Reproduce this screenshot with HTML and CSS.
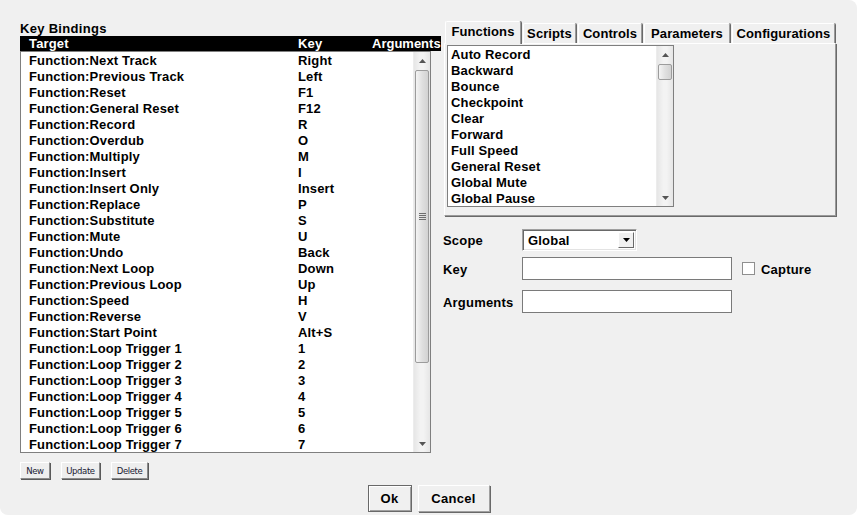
FILE: index.html
```html
<!DOCTYPE html>
<html>
<head>
<meta charset="utf-8">
<link rel="stylesheet" href="styles.css">
</head>
<body>
<div class="window">
  <div class="main">
    <div class="left">
      <div class="title">Key Bindings</div>
      <div class="header">
        <span class="c-target">Target</span><span class="c-key">Key</span><span class="c-args">Arguments</span>
      </div>
      <div class="list">
        <div class="rows">
          <div class="row"><span class="c-target">Function:Next Track</span><span class="c-key">Right</span></div>
          <div class="row"><span class="c-target">Function:Previous Track</span><span class="c-key">Left</span></div>
          <div class="row"><span class="c-target">Function:Reset</span><span class="c-key">F1</span></div>
          <div class="row"><span class="c-target">Function:General Reset</span><span class="c-key">F12</span></div>
          <div class="row"><span class="c-target">Function:Record</span><span class="c-key">R</span></div>
          <div class="row"><span class="c-target">Function:Overdub</span><span class="c-key">O</span></div>
          <div class="row"><span class="c-target">Function:Multiply</span><span class="c-key">M</span></div>
          <div class="row"><span class="c-target">Function:Insert</span><span class="c-key">I</span></div>
          <div class="row"><span class="c-target">Function:Insert Only</span><span class="c-key">Insert</span></div>
          <div class="row"><span class="c-target">Function:Replace</span><span class="c-key">P</span></div>
          <div class="row"><span class="c-target">Function:Substitute</span><span class="c-key">S</span></div>
          <div class="row"><span class="c-target">Function:Mute</span><span class="c-key">U</span></div>
          <div class="row"><span class="c-target">Function:Undo</span><span class="c-key">Back</span></div>
          <div class="row"><span class="c-target">Function:Next Loop</span><span class="c-key">Down</span></div>
          <div class="row"><span class="c-target">Function:Previous Loop</span><span class="c-key">Up</span></div>
          <div class="row"><span class="c-target">Function:Speed</span><span class="c-key">H</span></div>
          <div class="row"><span class="c-target">Function:Reverse</span><span class="c-key">V</span></div>
          <div class="row"><span class="c-target">Function:Start Point</span><span class="c-key">Alt+S</span></div>
          <div class="row"><span class="c-target">Function:Loop Trigger 1</span><span class="c-key">1</span></div>
          <div class="row"><span class="c-target">Function:Loop Trigger 2</span><span class="c-key">2</span></div>
          <div class="row"><span class="c-target">Function:Loop Trigger 3</span><span class="c-key">3</span></div>
          <div class="row"><span class="c-target">Function:Loop Trigger 4</span><span class="c-key">4</span></div>
          <div class="row"><span class="c-target">Function:Loop Trigger 5</span><span class="c-key">5</span></div>
          <div class="row"><span class="c-target">Function:Loop Trigger 6</span><span class="c-key">6</span></div>
          <div class="row"><span class="c-target">Function:Loop Trigger 7</span><span class="c-key">7</span></div>
        </div>
        <div class="vscroll">
          <div class="arrow"><svg width="7" height="4" viewBox="0 0 7 4"><path d="M0 4 L3.5 0 L7 4 Z" fill="#555"/></svg></div>
          <div class="track">
            <div class="thumb big"><span class="grip"></span></div>
          </div>
          <div class="arrow"><svg width="7" height="4" viewBox="0 0 7 4"><path d="M0 0 L3.5 4 L7 0 Z" fill="#555"/></svg></div>
        </div>
      </div>
      <div class="small-buttons">
        <div class="sbtn w-new">New</div>
        <div class="sbtn w-update">Update</div>
        <div class="sbtn w-delete">Delete</div>
      </div>
    </div>
    <div class="right">
      <div class="tabs">
        <div class="tab selected t-func">Functions</div>
        <div class="tab t-scripts">Scripts</div>
        <div class="tab t-controls">Controls</div>
        <div class="tab t-params">Parameters</div>
        <div class="tab t-configs">Configurations</div>
      </div>
      <div class="panel">
        <div class="flist">
          <div class="frows">
            <div class="frow">Auto Record</div>
            <div class="frow">Backward</div>
            <div class="frow">Bounce</div>
            <div class="frow">Checkpoint</div>
            <div class="frow">Clear</div>
            <div class="frow">Forward</div>
            <div class="frow">Full Speed</div>
            <div class="frow">General Reset</div>
            <div class="frow">Global Mute</div>
            <div class="frow">Global Pause</div>
          </div>
          <div class="vscroll">
            <div class="arrow"><svg width="7" height="4" viewBox="0 0 7 4"><path d="M0 4 L3.5 0 L7 4 Z" fill="#555"/></svg></div>
            <div class="track">
              <div class="thumb small"></div>
            </div>
            <div class="arrow"><svg width="7" height="4" viewBox="0 0 7 4"><path d="M0 0 L3.5 4 L7 0 Z" fill="#555"/></svg></div>
          </div>
        </div>
      </div>
      <div class="form">
        <div class="frm-row r-scope">
          <div class="lbl">Scope</div>
          <div class="select">
            <span class="sel-text">Global</span>
            <span class="sel-btn"><svg width="7" height="4" viewBox="0 0 7 4"><path d="M0 0 L3.5 4 L7 0 Z" fill="#000"/></svg></span>
          </div>
        </div>
        <div class="frm-row r-key">
          <div class="lbl">Key</div>
          <div class="input"></div>
          <div class="check"></div>
          <div class="check-lbl">Capture</div>
        </div>
        <div class="frm-row r-args">
          <div class="lbl">Arguments</div>
          <div class="input"></div>
        </div>
      </div>
    </div>
  </div>
  <div class="footer">
    <div class="btn default w-ok">Ok</div>
    <div class="btn w-cancel">Cancel</div>
  </div>
</div>
</body>
</html>
```
FILE: styles.css
```css
html, body {
  margin: 0;
  padding: 0;
  background: #ffffff;
}
body {
  font-family: "Liberation Sans", Arial, sans-serif;
  font-weight: bold;
  font-size: 13px;
  color: #000;
}
.window {
  width: 857px;
  height: 515px;
  background: #f0f0f0;
  border-radius: 0 8px 8px 8px;
  display: flex;
  flex-direction: column;
  box-sizing: border-box;
  overflow: hidden;
}
.main {
  display: flex;
  padding: 21px 0 0 20px;
}
.left {
  width: 421px;
  display: flex;
  flex-direction: column;
}
.title {
  height: 15px;
  line-height: 15px;
  letter-spacing: 0.3px;
}
.header {
  height: 15px;
  line-height: 15px;
  background: #000;
  color: #fff;
  display: flex;
  padding-left: 9px;
  letter-spacing: 0.15px;
}
.c-target {
  width: 269px;
  white-space: nowrap;
}
.c-key {
  width: 74px;
  white-space: nowrap;
}
.c-args {
  letter-spacing: 0;
}
.list {
  width: 411px;
  height: 402px;
  box-sizing: border-box;
  border: 1px solid #7f7f7f;
  background: #fff;
  display: flex;
}
.rows {
  flex: 1;
  padding-left: 8px;
  letter-spacing: 0.15px;
}
.row {
  height: 16px;
  line-height: 18px;
  display: flex;
}
.vscroll {
  width: 16px;
  display: flex;
  flex-direction: column;
  background: linear-gradient(to right, #e6e6e6, #f3f3f3 40%, #f3f3f3 60%, #e6e6e6);
  border-left: 1px solid #ececec;
}
.arrow {
  height: 17px;
  display: flex;
  align-items: center;
  justify-content: center;
}
.track {
  flex: 1;
  display: flex;
  flex-direction: column;
  padding: 1px 1px 0 1px;
}
.thumb {
  box-sizing: border-box;
  border: 1px solid #9c9c9c;
  border-radius: 2px;
  background: linear-gradient(to right, #f4f4f4, #e0e0e0 50%, #d2d2d2);
  display: flex;
  align-items: center;
  justify-content: center;
}
.thumb.big {
  height: 293px;
}
.thumb.small {
  height: 16px;
}
.grip {
  width: 7px;
  height: 7px;
  background: repeating-linear-gradient(to bottom, #6e6e6e 0, #6e6e6e 1px, transparent 1px, transparent 2px);
}
.small-buttons {
  display: flex;
  gap: 11px;
  margin-top: 9px;
}
.sbtn {
  height: 17px;
  box-sizing: border-box;
  border-top: 1px solid #ffffff;
  border-left: 1px solid #ffffff;
  border-right: 1px solid #8a8a8a;
  border-bottom: 1px solid #8a8a8a;
  box-shadow: 1px 1px 0 #5a5a5a;
  background: #eeeeee;
  font-family: "DejaVu Sans", sans-serif;
  font-weight: normal;
  font-size: 8.5px;
  letter-spacing: -0.4px;
  color: #1a1a33;
  display: flex;
  align-items: center;
  justify-content: center;
}
.w-new { width: 30px; }
.w-update { width: 39px; }
.w-delete { width: 37px; }
.right {
  margin-left: 3px;
  width: 393px;
  display: flex;
  flex-direction: column;
}
.tabs {
  display: flex;
  align-items: flex-end;
  height: 22px;
}
.tab {
  height: 20px;
  box-sizing: border-box;
  border-top: 1px solid #ffffff;
  border-left: 1px solid #ffffff;
  border-right: 1px solid #9a9a9a;
  box-shadow: 1px 0 0 #6a6a6a;
  border-radius: 2px 2px 0 0;
  margin-left: 2px;
  text-align: center;
  line-height: 19px;
  letter-spacing: 0.1px;
}
.tab.selected {
  height: 23px;
  margin-left: 1px;
  margin-bottom: -1px;
  background: #f0f0f0;
  position: relative;
  z-index: 1;
  line-height: 19px;
}
.t-func { width: 76px; }
.t-scripts { width: 53px; }
.t-controls { width: 64px; }
.t-params { width: 86px; }
.t-configs { width: 103px; }
.panel {
  width: 392px;
  height: 173px;
  box-sizing: border-box;
  border-top: 1px solid #ffffff;
  border-left: 1px solid #ffffff;
  border-right: 1px solid #9a9a9a;
  border-bottom: 1px solid #9a9a9a;
  box-shadow: 1px 1px 0 #6a6a6a;
  padding: 1px 0 0 2px;
}
.flist {
  width: 227px;
  height: 162px;
  box-sizing: border-box;
  border: 1px solid #7f7f7f;
  background: #fff;
  display: flex;
}
.frows {
  flex: 1;
  padding-left: 3px;
  letter-spacing: 0.15px;
}
.frow {
  height: 16px;
  line-height: 17px;
  white-space: nowrap;
}
.form {
  margin-top: 12px;
  margin-left: -1px;
  display: flex;
  flex-direction: column;
}
.frm-row {
  display: flex;
  align-items: center;
}
.r-scope { height: 23px; }
.r-key { height: 23px; margin-top: 6px; }
.r-args { height: 23px; margin-top: 10px; }
.lbl {
  width: 79px;
  letter-spacing: 0.2px;
  padding-top: 2px;
}
.select {
  width: 115px;
  height: 22px;
  box-sizing: border-box;
  border-top: 1px solid #a0a0a0;
  border-left: 1px solid #a0a0a0;
  border-right: 1px solid #ffffff;
  border-bottom: 1px solid #ffffff;
  box-shadow: inset 1px 1px 0 #696969, inset -1px -1px 0 #e3e3e3;
  background: #fff;
  display: flex;
  align-items: center;
  padding: 2px 2px 2px 5px;
}
.sel-text {
  flex: 1;
  letter-spacing: 0.2px;
  padding-top: 1px;
}
.sel-btn {
  width: 16px;
  height: 16px;
  box-sizing: border-box;
  background: #f0f0f0;
  border-top: 1px solid #ffffff;
  border-left: 1px solid #ffffff;
  border-right: 1px solid #696969;
  border-bottom: 1px solid #696969;
  display: flex;
  align-items: center;
  justify-content: center;
}
.input {
  width: 210px;
  height: 23px;
  box-sizing: border-box;
  border: 1px solid #7a7a7a;
  background: #fff;
}
.check {
  width: 13px;
  height: 13px;
  box-sizing: border-box;
  border: 1px solid #8f8f8f;
  background: #fff;
  margin-left: 10px;
}
.check-lbl {
  margin-left: 6px;
  letter-spacing: 0.2px;
  padding-top: 2px;
}
.footer {
  display: flex;
  justify-content: center;
  gap: 6px;
  margin-top: 6px;
}
.btn {
  height: 27px;
  box-sizing: border-box;
  background: #f0f0f0;
  border-top: 1px solid #ffffff;
  border-left: 1px solid #ffffff;
  border-right: 1px solid #a0a0a0;
  border-bottom: 1px solid #a0a0a0;
  box-shadow: 1px 1px 0 #696969;
  display: flex;
  align-items: center;
  justify-content: center;
  letter-spacing: 0.3px;
}
.btn.default {
  border: 1px solid #696969;
  box-shadow: inset 1px 1px 0 #ffffff, inset -1px -1px 0 #a0a0a0;
}
.w-ok { width: 44px; }
.w-cancel { width: 72px; }
```
